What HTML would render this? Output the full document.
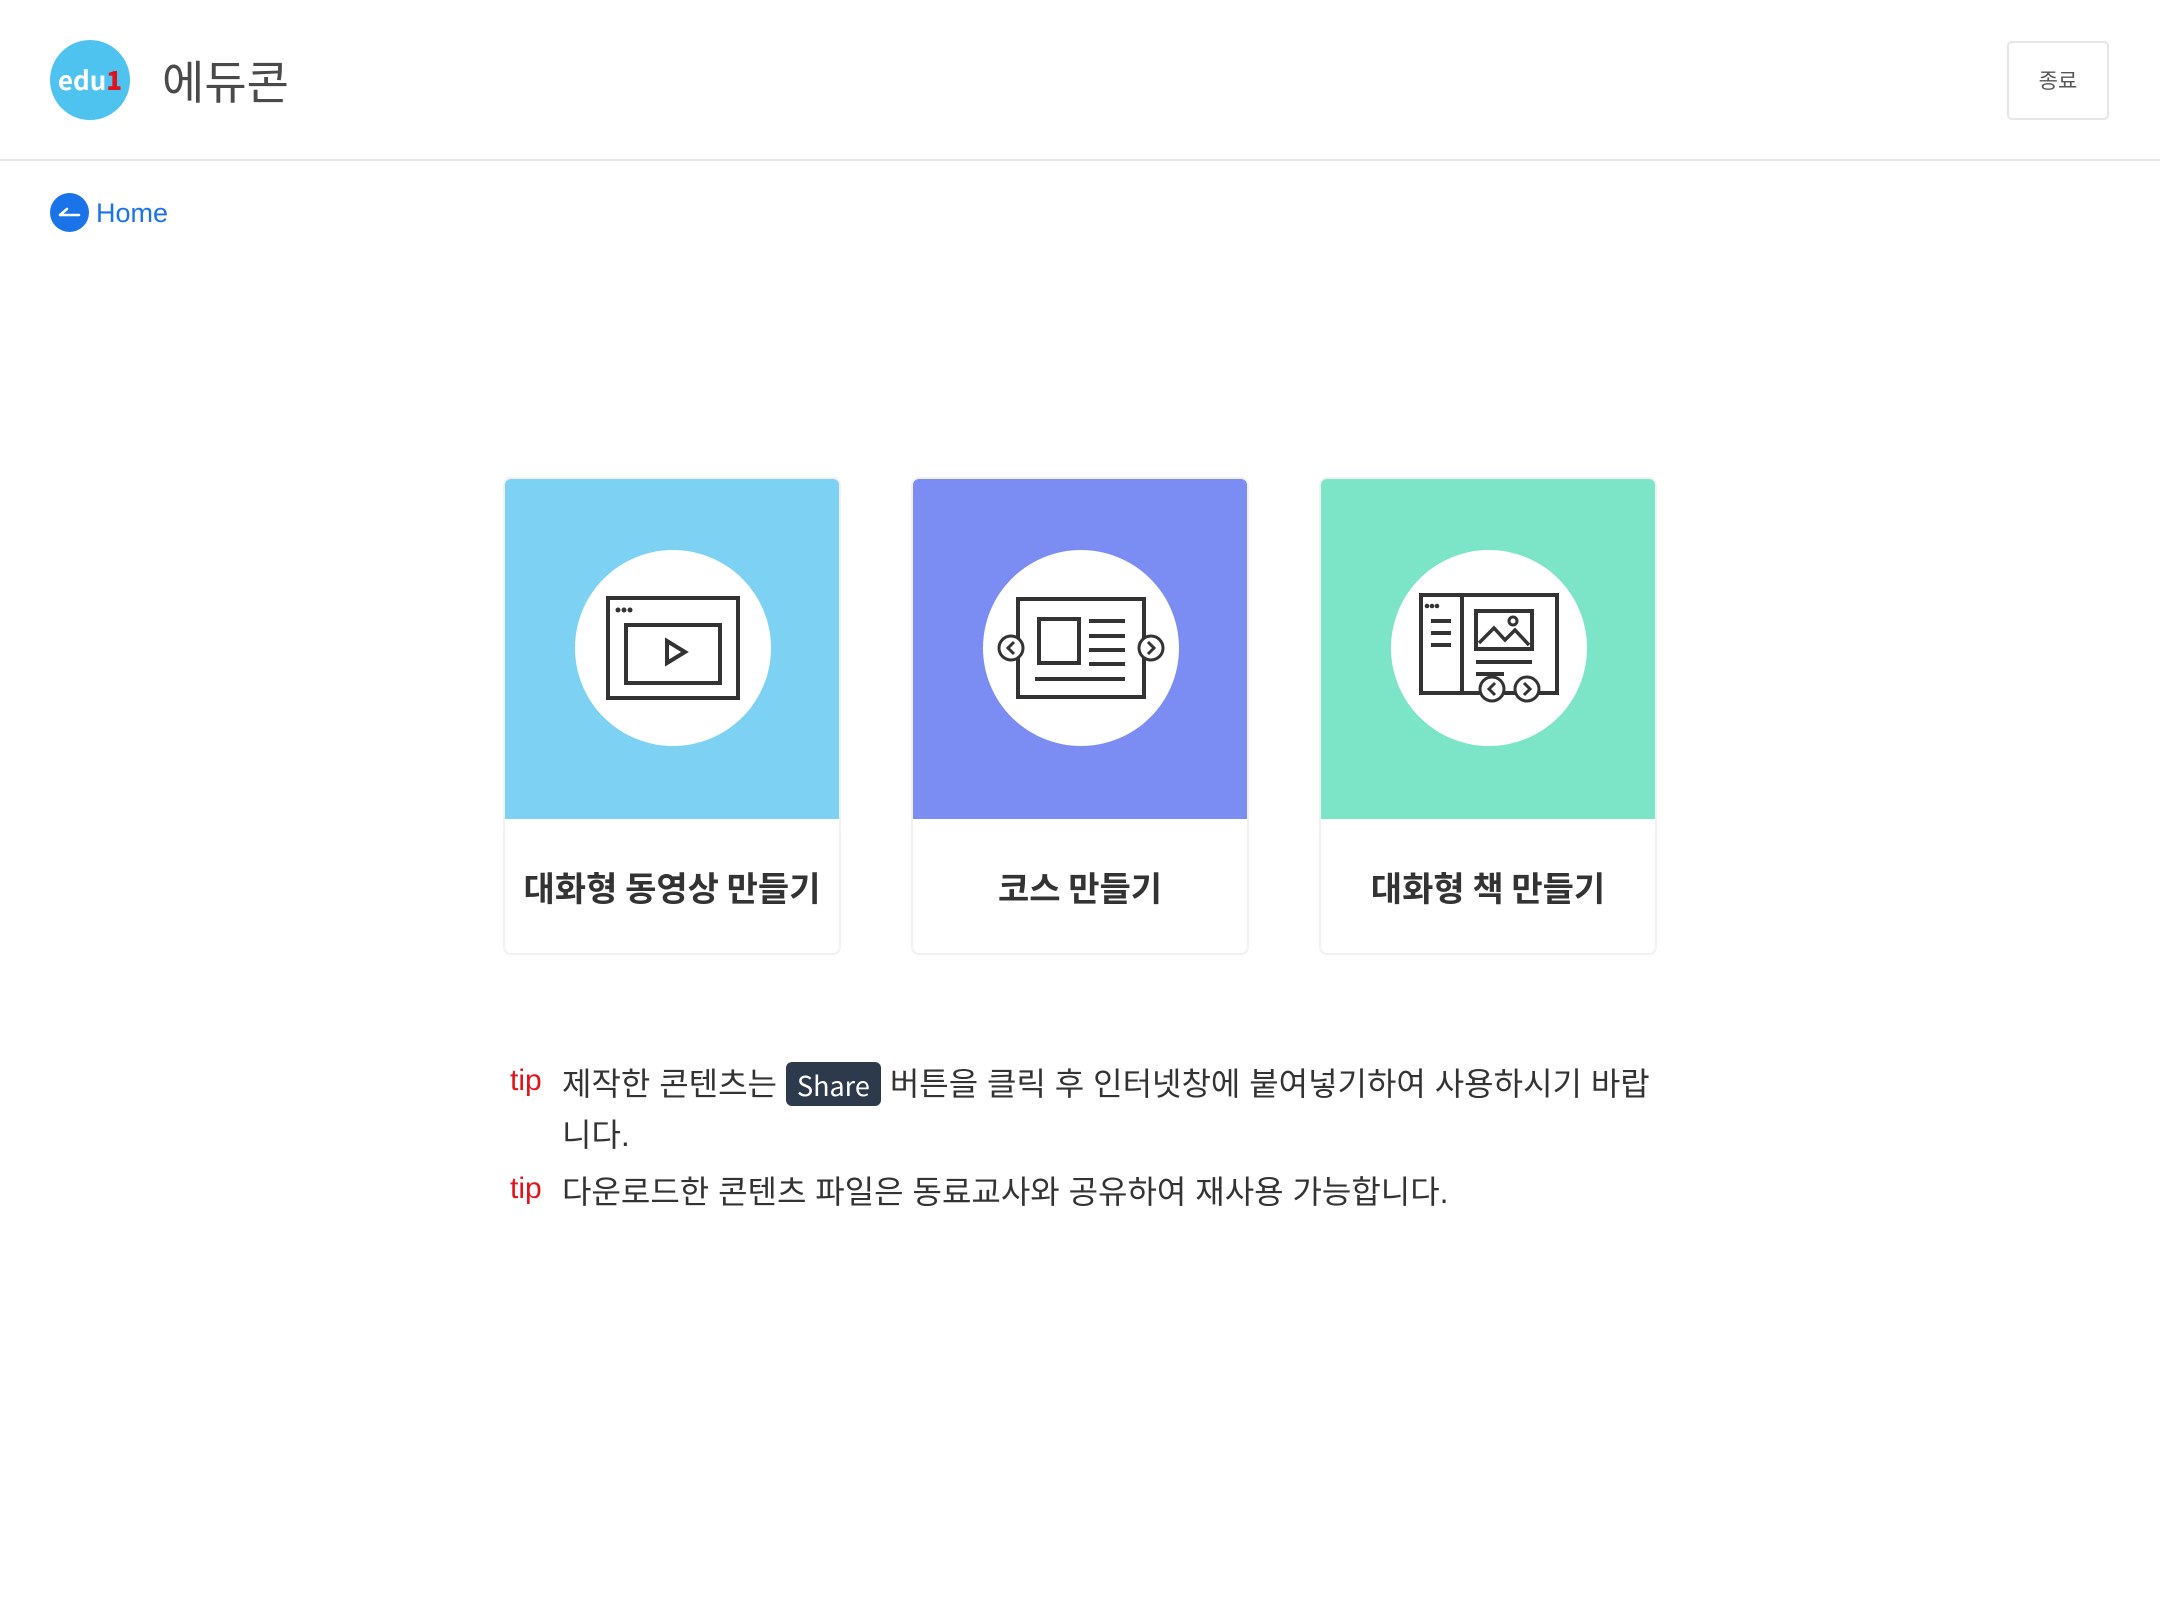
<!DOCTYPE html>
<html><head><meta charset="utf-8"><style>
*{margin:0;padding:0;box-sizing:border-box}
body{width:2160px;height:1620px;background:#fff;font-family:"Liberation Sans","Noto Sans CJK KR",sans-serif;position:relative;overflow:hidden}
.hdr{position:absolute;left:0;top:0;width:2160px;height:161px;border-bottom:2px solid #e8e8e8}
.logo{position:absolute;left:50px;top:40px;width:80px;height:80px;border-radius:50%;background:#4fc3ef;color:#fff;font-weight:bold;font-size:26px;text-align:center;line-height:80px;font-family:"Noto Sans CJK KR",sans-serif}
.logo b{color:#e0121b}
.title{position:absolute;left:162px;top:48px;font-size:46px;color:#4a4a4a;line-height:64px;font-family:"Noto Sans CJK KR",sans-serif}
.btn{position:absolute;left:2007px;top:41px;width:102px;height:79px;border:2px solid #e6e6e6;border-radius:5px;font-size:21px;color:#555;text-align:center;line-height:75px;font-family:"Noto Sans CJK KR",sans-serif}
.home{position:absolute;left:50px;top:193px;width:39px;height:39px;border-radius:50%;background:#1a73e8}
.hometxt{position:absolute;left:96px;top:194px;font-size:27px;color:#1a73e8;line-height:38px}
.card{position:absolute;top:477px;width:338px;height:478px;border:2px solid #f1f1f1;border-radius:8px;overflow:hidden;background:#fff}
.card .top{height:340px;position:relative}
.card svg{position:absolute;left:70px;top:71px}
.card .lbl{height:135px;line-height:135px;text-align:center;font-size:34px;font-weight:bold;color:#333;font-family:"Noto Sans CJK KR",sans-serif}
.tip{position:absolute;left:510px;font-size:30px;color:#e3131b;line-height:44px}
.t{position:absolute;left:562px;font-size:32px;color:#333;line-height:44px;white-space:nowrap;font-family:"Liberation Sans","Noto Sans CJK KR",sans-serif}
.share{display:inline-block;position:relative;top:-3px;background:#2d3a4b;color:#fff;border-radius:6px;padding:0 11px;height:44px;line-height:46px;vertical-align:middle;margin:0 9px 0 9px;font-family:"Noto Sans CJK KR",sans-serif;font-size:27px}
</style></head><body>
<div class="hdr">
<div class="logo">edu<b>1</b></div>
<div class="title">에듀콘</div>
<div class="btn">종료</div>
</div>
<div class="home"><svg width="39" height="39" viewBox="0 0 39 39"><path d="M10 22 H29 M10 22 L17 16" stroke="#fff" stroke-width="2.5" fill="none" stroke-linecap="round"/></svg></div>
<div class="hometxt">Home</div>

<div class="card" style="left:503px"><div class="top" style="background:#7dd1f3">
<svg width="196" height="196" viewBox="-98 -98 196 196"><circle r="98" fill="#fff"/>
<g fill="none" stroke="#333" stroke-width="4"><rect x="-65" y="-50" width="130" height="100"/><rect x="-47" y="-23" width="94" height="58"/></g>
<path d="M-6 -7 L12 4 L-6 15Z" fill="none" stroke="#333" stroke-width="4"/>
<g fill="#333"><circle cx="-55" cy="-38" r="2.5"/><circle cx="-49" cy="-38" r="2.5"/><circle cx="-43" cy="-38" r="2.5"/></g></svg>
</div><div class="lbl">대화형 동영상 만들기</div></div>

<div class="card" style="left:911px"><div class="top" style="background:#7b8cf2">
<svg width="196" height="196" viewBox="-98 -98 196 196"><circle r="98" fill="#fff"/>
<g fill="none" stroke="#333" stroke-width="4"><rect x="-63" y="-49" width="126" height="98"/><rect x="-42" y="-29" width="40" height="44"/></g>
<g stroke="#333" stroke-width="4"><path d="M8 -27H44M8 -12H44M8 2H44M8 16H44M-46 31H44" fill="none"/></g>
<g fill="#fff" stroke="#333" stroke-width="3"><circle cx="-70" cy="0" r="12"/><circle cx="70" cy="0" r="12"/></g>
<path d="M-67 -6 L-73 0 L-67 6 M67 -6 L73 0 L67 6" fill="none" stroke="#333" stroke-width="3"/></svg>
</div><div class="lbl">코스 만들기</div></div>

<div class="card" style="left:1319px"><div class="top" style="background:#7de5c7">
<svg width="196" height="196" viewBox="-98 -98 196 196"><circle r="98" fill="#fff"/>
<g fill="none" stroke="#333" stroke-width="4"><rect x="-68" y="-53" width="136" height="98"/><path d="M-27 -53V45"/><rect x="-13" y="-37" width="56" height="38"/></g>
<path d="M-10 -5 L5 -20 L16 -8 L26 -18 L40 -3" fill="none" stroke="#333" stroke-width="3.5"/><circle cx="24" cy="-27" r="4" fill="none" stroke="#333" stroke-width="3"/>
<g stroke="#333" stroke-width="4"><path d="M-58 -27H-38M-58 -15H-38M-58 -3H-38M-13 14H43M-13 26H15"/></g>
<g fill="#333"><circle cx="-62" cy="-42" r="2.3"/><circle cx="-57" cy="-42" r="2.3"/><circle cx="-52" cy="-42" r="2.3"/></g>
<g fill="#fff" stroke="#333" stroke-width="3"><circle cx="3" cy="41" r="12"/><circle cx="38" cy="41" r="12"/></g>
<path d="M6 35 L0 41 L6 47 M35 35 L41 41 L35 47" fill="none" stroke="#333" stroke-width="3"/></svg>
</div><div class="lbl">대화형 책 만들기</div></div>

<div class="tip" style="top:1059px">tip</div>
<div class="t" style="top:1062px">제작한 콘텐츠는<span class="share">Share</span>버튼을 클릭 후 인터넷창에 붙여넣기하여 사용하시기 바랍</div>
<div class="t" style="top:1113px">니다.</div>
<div class="tip" style="top:1167px">tip</div>
<div class="t" style="top:1170px">다운로드한 콘텐츠 파일은 동료교사와 공유하여 재사용 가능합니다.</div>
</body></html>
